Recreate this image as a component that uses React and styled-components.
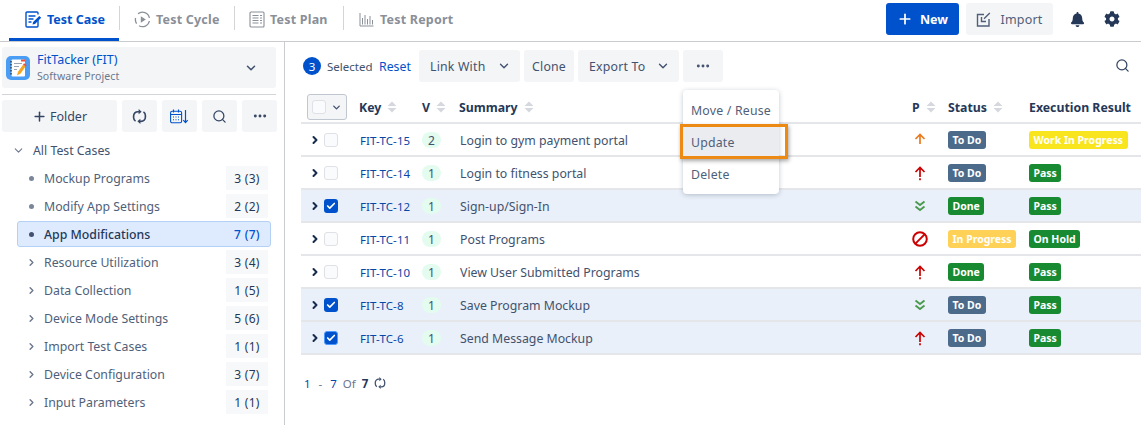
import React from "react";
import styled, { createGlobalStyle } from "styled-components";
import { Plus, Search, MoreHorizontal, ChevronDown, ChevronRight, Check } from "lucide-react";
import { FaBell, FaCog } from "react-icons/fa";

const GlobalStyle = createGlobalStyle`
  html, body { margin: 0; padding: 0; background: #fff; }
  body { font-family: "Noto Sans", "Open Sans", sans-serif; color: #253858; }
  * { box-sizing: border-box; }
`;

const Page = styled.div`
  width: 1141px;
  height: 425px;
  overflow: hidden;
  display: flex;
  flex-direction: column;
`;

const Header = styled.header`
  height: 42px;
  display: flex;
  justify-content: space-between;
  border-bottom: 1px solid #c9cbcf;
  padding-left: 9px;
`;

const Tabs = styled.nav`
  display: flex;
  height: 41px;
`;

const Tab = styled.div`
  position: relative;
  display: flex;
  align-items: center;
  gap: ${(p) => p.$gap || 5}px;
  width: ${(p) => p.$width}px;
  padding-left: ${(p) => p.$pad}px;
  padding-bottom: ${(p) => (p.$active ? 0 : 3)}px;
  font-size: 12.5px;
  font-weight: 700;
  letter-spacing: ${(p) => (p.$active ? 0 : 0.2)}px;
  color: ${(p) => (p.$active ? "#0052cc" : "#8a8f98")};
  border-bottom: ${(p) => (p.$active ? "3px solid #0052cc" : "none")};
  height: 41px;
  &::after {
    content: "";
    display: ${(p) => (p.$last ? "none" : "block")};
    position: absolute;
    right: -1px;
    top: 6px;
    height: 24px;
    width: 1px;
    background: #d3d5d9;
  }
`;

const HeaderActions = styled.div`
  display: flex;
  align-items: flex-start;
  padding-top: 3px;
`;

const NewButton = styled.button`
  width: 73px;
  height: 32px;
  border: 0;
  border-radius: 3px;
  background: #0052cc;
  color: #fff;
  font: 700 12.5px "Noto Sans", sans-serif;
  display: flex;
  align-items: center;
  justify-content: center;
  gap: 7px;
  margin-right: 7px;
`;

const ImportButton = styled.button`
  width: 87px;
  height: 32px;
  border: 0;
  border-radius: 3px;
  background: #f4f5f7;
  color: #505f79;
  font: 400 12.5px "Noto Sans", sans-serif;
  letter-spacing: 0.2px;
  display: flex;
  align-items: center;
  justify-content: center;
  gap: 9px;
  margin-right: 17px;
`;

const HeaderIcon = styled.span`
  display: flex;
  align-items: center;
  height: 32px;
  margin-right: ${(p) => p.$gap}px;
  color: #253858;
`;

const Body = styled.div`
  flex: 1;
  display: flex;
  min-height: 0;
`;

const Sidebar = styled.aside`
  width: 285px;
  flex: none;
  border-right: 1px solid #c9cbcf;
  padding: 5px 8px 0 2px;
`;

const ProjectCard = styled.div`
  height: 41px;
  background: #f4f5f7;
  border-radius: 3px;
  display: flex;
  align-items: center;
  padding: 0 18px 0 4px;
`;

const ProjectText = styled.div`
  flex: 1;
  margin-left: 7px;
  display: flex;
  flex-direction: column;
`;

const ProjectName = styled.span`
  font-size: 12.5px;
  line-height: 17px;
  color: #0052cc;
`;

const ProjectType = styled.span`
  font-size: 10.5px;
  line-height: 16px;
  color: #6b778c;
  letter-spacing: 0.1px;
`;

const Divider = styled.div`
  height: 1px;
  background: #d3d5d9;
  margin: 6px 0 5px;
`;

const SideTools = styled.div`
  display: flex;
  gap: 5px;
`;

const ToolButton = styled.button`
  width: ${(p) => p.$width || 35}px;
  height: 32px;
  flex: none;
  border: 0;
  border-radius: 3px;
  background: #f4f5f7;
  color: ${(p) => p.$color || "#344563"};
  font: 400 12.5px "Noto Sans", sans-serif;
  display: flex;
  align-items: center;
  justify-content: center;
  gap: 3px;
  padding: 0;
`;

const Tree = styled.div`
  margin: 4px 5px 0 0;
  display: flex;
  flex-direction: column;
`;

const TreeRoot = styled.div`
  height: 29px;
  padding-bottom: 1px;
  display: flex;
  align-items: center;
  gap: 8px;
  padding-left: 10px;
  font-size: 12.3px;
  color: #42526e;
`;

const TreeRow = styled.div`
  height: 26px;
  margin-bottom: 2px;
  margin-left: 15px;
  padding-left: 8px;
  display: flex;
  align-items: center;
  font-size: 12.3px;
  color: ${(p) => (p.$active ? "#253858" : "#505f79")};
  font-weight: ${(p) => (p.$active ? 500 : 400)};
  background: ${(p) => (p.$active ? "#deebff" : "transparent")};
  border: 1px solid ${(p) => (p.$active ? "#b3d0f5" : "transparent")};
  border-radius: 3px;
`;

const TreeMark = styled.span`
  width: 18px;
  flex: none;
  display: flex;
  align-items: center;
  color: #6b778c;
`;

const Dot = styled.span`
  width: 5px;
  height: 5px;
  margin-left: 3px;
  border-radius: 50%;
  background: ${(p) => (p.$active ? "#42526e" : "#7a869a")};
`;

const TreeLabel = styled.span`
  flex: 1;
`;

const Count = styled.span`
  width: 42px;
  height: 24px;
  margin-right: 2px;
  display: flex;
  align-items: center;
  justify-content: center;
  font-size: 12px;
  letter-spacing: 0.3px;
  color: ${(p) => (p.$active ? "#0052cc" : "#253858")};
  background: ${(p) => (p.$active ? "transparent" : "#f7f8f9")};
`;

const Main = styled.main`
  position: relative;
  flex: 1;
  min-width: 0;
  padding: 8px 0 0 16px;
`;

const Toolbar = styled.div`
  height: 32px;
  display: flex;
  align-items: center;
  gap: 4px;
  position: relative;
`;

const SelectedCount = styled.span`
  width: 18px;
  height: 18px;
  border-radius: 50%;
  background: #0052cc;
  color: #fff;
  font-size: 11.5px;
  display: flex;
  align-items: center;
  justify-content: center;
  margin: 0 2px 0 2px;
`;

const SelectedText = styled.span`
  width: 45px;
  font-size: 11.5px;
  color: #42526e;
  margin-right: 3px;
`;

const ResetLink = styled.span`
  width: 31px;
  font-size: 12.3px;
  color: #0052cc;
  margin-right: 5px;
`;

const BarButton = styled.button`
  width: ${(p) => p.$width}px;
  height: 32px;
  border: 0;
  border-radius: 3px;
  background: #f4f5f7;
  color: #42526e;
  font: 400 12.3px "Noto Sans", sans-serif;
  letter-spacing: 0.2px;
  display: flex;
  align-items: center;
  justify-content: ${(p) => (p.$center ? "center" : "space-between")};
  padding: ${(p) => (p.$center ? "0" : "0 9px 0 11px")};
`;

const TableSearch = styled.span`
  position: absolute;
  right: 11px;
  top: 8px;
  color: #344563;
  display: flex;
`;

const Row = styled.div`
  display: grid;
  grid-template-columns: 22px 36px 63px 37px 453px 36px 81px 1fr;
  align-items: center;
  height: 33px;
  padding-top: 1px;
  border-bottom: 2px solid #e4e6ea;
  background: ${(p) => (p.$selected ? "#eaf0f9" : "#fff")};
  font-size: 12.3px;
  color: #42526e;
`;

const HeadRow = styled(Row)`
  height: 33px;
  margin-top: 9px;
  font-size: 12.3px;
  font-weight: 700;
  color: #253858;
`;

const HeadCell = styled.div`
  display: flex;
  align-items: center;
  gap: 6px;
  white-space: nowrap;
`;

const SelectAll = styled.div`
  grid-column: 1 / span 2;
  width: 40px;
  height: 26px;
  margin-left: 6px;
  border: 1px solid #c1c7d0;
  border-radius: 3px;
  background: #f4f5f7;
  display: flex;
  align-items: center;
  justify-content: center;
  gap: 5px;
  color: #42526e;
`;

const Box = styled.span`
  width: 14px;
  height: 14px;
  margin-left: ${(p) => (p.$head ? 0 : 1)}px;
  flex: none;
  border-radius: 3px;
  border: ${(p) => (p.$focused ? "1.5px solid #4c9aff" : p.$checked ? "none" : "1.5px solid #dfe1e6")};
  background: ${(p) => (p.$checked ? "#0052cc" : "#fafbfc")};
  color: #fff;
  display: flex;
  align-items: center;
  justify-content: center;
`;

const Expand = styled.span`
  display: flex;
  justify-content: center;
  padding-left: 5px;
  color: #172b4d;
`;

const KeyLink = styled.span`
  color: #0747a6;
  font-size: 11.5px;
  letter-spacing: 0.1px;
  padding-left: 1px;
`;

const Version = styled.span`
  width: 19px;
  height: 16px;
  border-radius: 8px;
  background: #e3fcef;
  color: #42526e;
  font-size: 12px;
  display: flex;
  align-items: center;
  justify-content: center;
`;

const Summary = styled.span`
  padding-left: 1px;
`;

const Badge = styled.span`
  display: inline-block;
  height: 18px;
  line-height: 18px;
  padding: 0 4.5px;
  border-radius: 3px;
  font-size: 10.5px;
  font-weight: 700;
  color: #fff;
  white-space: nowrap;
  background: ${(p) => p.$bg};
`;

const PriorityCell = styled.span`
  display: flex;
  justify-content: center;
  width: 16px;
`;

const Cell = styled.div`
  display: flex;
  align-items: center;
`;

const Footer = styled.div`
  margin-top: 19px;
  display: flex;
  align-items: center;
  gap: 6px;
  padding-left: 3px;
  font-size: 11.5px;
  color: #6b778c;
  height: 18px;
`;

const FooterNum = styled.span`
  color: #0747a6;
`;

const FooterDash = styled.span`
  margin: 0 2px;
`;

const FooterTotal = styled.span`
  color: #253858;
  font-weight: 700;
`;

const Menu = styled.div`
  position: absolute;
  left: 398px;
  top: 48px;
  width: 96px;
  height: 104px;
  padding-top: 4px;
  background: #fff;
  border-radius: 4px;
  box-shadow: 0 1px 5px rgba(9, 30, 66, 0.25);
`;

const MenuItem = styled.div`
  height: 32px;
  padding-left: 8px;
  display: flex;
  align-items: center;
  position: relative;
  font-size: 12.3px;
  white-space: nowrap;
  letter-spacing: 0.2px;
  color: #505f79;
  background: ${(p) => (p.$hover ? "#ebecf0" : "transparent")};
`;

const Highlight = styled.span`
  position: absolute;
  left: -3px;
  top: -2px;
  width: 108px;
  height: 35px;
  border: 3px solid #ec8a13;
  box-shadow: 1px 2px 4px rgba(0, 0, 0, 0.35);
`;

const SortIcon = () => (
  <svg width="10" height="12" viewBox="0 0 10 12">
    <path d="M5 0.5 9.5 5h-9z" fill="#d5d8de" />
    <path d="M5 11.5.5 7h9z" fill="#d5d8de" />
  </svg>
);

const SyncIcon = ({ size = 15, color = "#344563" }) => (
  <svg width={size} height={size} viewBox="0 0 14 14" fill="none" stroke={color} strokeWidth="1.5">
    <path d="M6.5 2.5H5.5A4 4 0 0 0 1.5 6.5V8a4 4 0 0 0 1.8 3.3" />
    <path d="M6.2 0 9 2.5 6.2 5z" fill={color} stroke="none" />
    <path d="M7.5 11.5H8.5a4 4 0 0 0 4-4V6a4 4 0 0 0-1.8-3.3" />
    <path d="M7.8 9 5 11.5 7.8 14z" fill={color} stroke="none" />
  </svg>
);

const CaseIcon = () => (
  <svg width="17" height="17" viewBox="0 0 17 17" fill="none" stroke="#0052cc" strokeWidth="1.4">
    <path d="M13 8.5V15a1 1 0 0 1-1 1H2a1 1 0 0 1-1-1V2a1 1 0 0 1 1-1h10a1 1 0 0 1 1 1v1.5" />
    <path d="M3.5 5h7M3.5 8h5M3.5 11h3" />
    <path d="M7.5 13.5l.6-2.4L14.3 5l1.9 1.8-6.2 6.2z" fill="#0052cc" stroke="none" />
  </svg>
);

const CycleIcon = () => (
  <svg width="17" height="17" viewBox="0 0 17 17" fill="none" stroke="#8a8f98" strokeWidth="1.3">
    <path d="M4 2.8A7 7 0 0 1 15.4 7M15.4 10A7 7 0 0 1 5 14.7M2.6 12.6A7 7 0 0 1 1.6 7" />
    <path d="M6.8 5.2v6.6l5-3.3z" fill="#8a8f98" stroke="none" />
  </svg>
);

const PlanIcon = () => (
  <svg width="16" height="17" viewBox="0 0 16 17" fill="none" stroke="#8a8f98" strokeWidth="1.1">
    <rect x="1" y="1" width="14" height="15" rx="1" />
    <path d="M3.5 4.5h6M3.5 7h6M3.5 9.5h6M3.5 12h6M11 4.5h2M11 7h2M11 9.5h2M11 12h2" />
  </svg>
);

const ReportIcon = () => (
  <svg width="15" height="15" viewBox="0 0 15 15" fill="none" stroke="#8a8f98" strokeWidth="1">
    <path d="M1 1v13h13.5M3.5 12.5V6M6 12.5V3M8.5 12.5V7M11 12.5V4M13.5 12.5V8" />
  </svg>
);

const ImportIcon = () => (
  <svg width="15" height="15" viewBox="0 0 15 15" fill="none" stroke="#505f79" strokeWidth="1.4">
    <path d="M8 2.5H1.5V14H13V7" />
    <path d="M13.8 1 8 6.8M5.5 5v4.5H10" />
  </svg>
);

const CalendarSortIcon = () => (
  <svg width="19" height="15" viewBox="0 0 19 15" fill="none" stroke="#0052cc" strokeWidth="1.1">
    <rect x="0.6" y="2.2" width="11" height="11.5" rx="1.5" />
    <path d="M.6 5.5h11M3.5.5v3M8.5.5v3M3 8h1M5.5 8h1M8 8h1M3 10.8h1M5.5 10.8h1M8 10.8h1" />
    <path d="M15.5 1v12.5M13.3 11.2l2.2 2.5 2.2-2.5" strokeWidth="1.2" />
  </svg>
);

const ProjectLogo = () => (
  <svg width="24" height="24" viewBox="0 0 24 24">
    <rect width="24" height="24" rx="5" fill="#4a9df5" />
    <rect x="5.5" y="3.5" width="13.5" height="17" rx="1" fill="#fff" />
    <path d="M8 7.5h8M8 10.5h5M8 13.5h3" stroke="#9aa5b1" strokeWidth="1" />
    <path d="M5 5v14" stroke="#34495e" strokeWidth="1.5" strokeDasharray="1.5 1.5" />
    <path d="M11 19.5l1-3.8 5-7 2.6 1.8-5 7z" fill="#f5a623" />
    <path d="M17 8.7l1-1.5 2.6 1.8-1 1.5z" fill="#e8503a" />
    <rect x="15" y="3.5" width="4" height="2" fill="#e8503a" />
  </svg>
);

const PRIORITY_COLORS = { high: "#ec7a1c", highest: "#cc0000", low: "#4a9a4f" };

const PriorityIcon = ({ level }) => {
  if (level === "blocker")
    return (
      <svg width="16" height="16" viewBox="0 0 16 16" fill="none" stroke="#cc0000" strokeWidth="2">
        <circle cx="8" cy="8" r="6.8" />
        <path d="M3.4 12.6 12.6 3.4" />
      </svg>
    );
  if (level === "low")
    return (
      <svg width="12" height="12" viewBox="0 0 12 12" fill="none" stroke={PRIORITY_COLORS.low} strokeWidth="1.9">
        <path d="M1.5 1.5 6 5l4.5-3.5M1.5 6.5 6 10l4.5-3.5" />
      </svg>
    );
  const color = PRIORITY_COLORS[level];
  return (
    <svg width="12" height="15" viewBox="0 0 12 15" fill="none" stroke={color} strokeWidth="1.7">
      <path d="M1.5 6 6 1.5 10.5 6M6 2v9" />
      {level === "highest" && <path d="M6 12.2v2" />}
    </svg>
  );
};

const folders = [
  { name: "Mockup Programs", count: "3 (3)", leaf: true },
  { name: "Modify App Settings", count: "2 (2)", leaf: true },
  { name: "App Modifications", count: "7 (7)", leaf: true, active: true },
  { name: "Resource Utilization", count: "3 (4)" },
  { name: "Data Collection", count: "1 (5)" },
  { name: "Device Mode Settings", count: "5 (6)" },
  { name: "Import Test Cases", count: "1 (1)" },
  { name: "Device Configuration", count: "3 (7)" },
  { name: "Input Parameters", count: "1 (1)" },
];

const GREEN = "#178a32";
const SLATE = "#4c6a8a";

const cases = [
  { key: "FIT-TC-15", v: 2, title: "Login to gym payment portal", priority: "high", status: ["To Do", SLATE], result: ["Work In Progress", "#f9e51e"] },
  { key: "FIT-TC-14", v: 1, title: "Login to fitness portal", priority: "highest", status: ["To Do", SLATE], result: ["Pass", GREEN] },
  { key: "FIT-TC-12", v: 1, title: "Sign-up/Sign-In", priority: "low", status: ["Done", GREEN], result: ["Pass", GREEN], selected: true },
  { key: "FIT-TC-11", v: 1, title: "Post Programs", priority: "blocker", status: ["In Progress", "#ffd257"], result: ["On Hold", GREEN] },
  { key: "FIT-TC-10", v: 1, title: "View User Submitted Programs", priority: "highest", status: ["Done", GREEN], result: ["Pass", GREEN] },
  { key: "FIT-TC-8", v: 1, title: "Save Program Mockup", priority: "low", status: ["To Do", SLATE], result: ["Pass", GREEN], selected: true },
  { key: "FIT-TC-6", v: 1, title: "Send Message Mockup", priority: "highest", status: ["To Do", SLATE], result: ["Pass", GREEN], selected: true, focused: true },
];

const App = () => (
  <Page>
    <GlobalStyle />
    <Header>
      <Tabs>
        <Tab $active $width={110} $pad={16}><CaseIcon />Test Case</Tab>
        <Tab $width={115} $pad={15}><CycleIcon />Test Cycle</Tab>
        <Tab $width={109} $pad={15}><PlanIcon />Test Plan</Tab>
        <Tab $last $gap={6} $width={120} $pad={16}><ReportIcon />Test Report</Tab>
      </Tabs>
      <HeaderActions>
        <NewButton><Plus size={16} strokeWidth={2.6} />New</NewButton>
        <ImportButton><ImportIcon />Import</ImportButton>
        <HeaderIcon $gap={19}><FaBell size={15} /></HeaderIcon>
        <HeaderIcon $gap={21}><FaCog size={16} /></HeaderIcon>
      </HeaderActions>
    </Header>
    <Body>
      <Sidebar>
        <ProjectCard>
          <ProjectLogo />
          <ProjectText>
            <ProjectName>FitTacker (FIT)</ProjectName>
            <ProjectType>Software Project</ProjectType>
          </ProjectText>
          <ChevronDown size={14} strokeWidth={2.6} color="#42526e" />
        </ProjectCard>
        <Divider />
        <SideTools>
          <ToolButton $width={115}><Plus size={15} strokeWidth={2.4} />Folder</ToolButton>
          <ToolButton><SyncIcon /></ToolButton>
          <ToolButton $color="#0052cc"><CalendarSortIcon /></ToolButton>
          <ToolButton><Search size={15} /></ToolButton>
          <ToolButton><MoreHorizontal size={16} strokeWidth={2.4} /></ToolButton>
        </SideTools>
        <Tree>
          <TreeRoot><ChevronDown size={13} color="#6b778c" />All Test Cases</TreeRoot>
          {folders.map((f) => (
            <TreeRow key={f.name} $active={f.active}>
              <TreeMark>{f.leaf ? <Dot $active={f.active} /> : <ChevronRight size={11} strokeWidth={3} />}</TreeMark>
              <TreeLabel>{f.name}</TreeLabel>
              <Count $active={f.active}>{f.count}</Count>
            </TreeRow>
          ))}
        </Tree>
      </Sidebar>
      <Main>
        <Toolbar>
          <SelectedCount>3</SelectedCount>
          <SelectedText>Selected</SelectedText>
          <ResetLink>Reset</ResetLink>
          <BarButton $width={101}>Link With<ChevronDown size={14} strokeWidth={2.4} /></BarButton>
          <BarButton $center $width={50}>Clone</BarButton>
          <BarButton $width={101}>Export To<ChevronDown size={14} strokeWidth={2.4} /></BarButton>
          <BarButton $center $width={40}><MoreHorizontal size={16} strokeWidth={2.4} /></BarButton>
          <TableSearch><Search size={15} /></TableSearch>
        </Toolbar>
        <HeadRow>
          <SelectAll><Box $head /><ChevronDown size={11} strokeWidth={3} /></SelectAll>
          <HeadCell>Key<SortIcon /></HeadCell>
          <HeadCell>V<SortIcon /></HeadCell>
          <HeadCell>Summary<SortIcon /></HeadCell>
          <HeadCell>P<SortIcon /></HeadCell>
          <HeadCell>Status<SortIcon /></HeadCell>
          <HeadCell>Execution Result</HeadCell>
        </HeadRow>
        {cases.map((c) => (
          <Row key={c.key} $selected={c.selected}>
            <Expand><ChevronRight size={12} strokeWidth={4} /></Expand>
            <Cell><Box $checked={c.selected} $focused={c.focused}>{c.selected && <Check size={10} strokeWidth={4} />}</Box></Cell>
            <KeyLink>{c.key}</KeyLink>
            <Cell><Version>{c.v}</Version></Cell>
            <Summary>{c.title}</Summary>
            <PriorityCell><PriorityIcon level={c.priority} /></PriorityCell>
            <Cell><Badge $bg={c.status[1]}>{c.status[0]}</Badge></Cell>
            <Cell><Badge $bg={c.result[1]}>{c.result[0]}</Badge></Cell>
          </Row>
        ))}
        <Footer>
          <FooterNum>1</FooterNum><FooterDash>-</FooterDash><FooterNum>7</FooterNum>Of<FooterTotal>7</FooterTotal>
          <SyncIcon size={12} color="#42526e" />
        </Footer>
        <Menu>
          <MenuItem>Move / Reuse</MenuItem>
          <MenuItem $hover>Update<Highlight /></MenuItem>
          <MenuItem>Delete</MenuItem>
        </Menu>
      </Main>
    </Body>
  </Page>
);

export default App;
